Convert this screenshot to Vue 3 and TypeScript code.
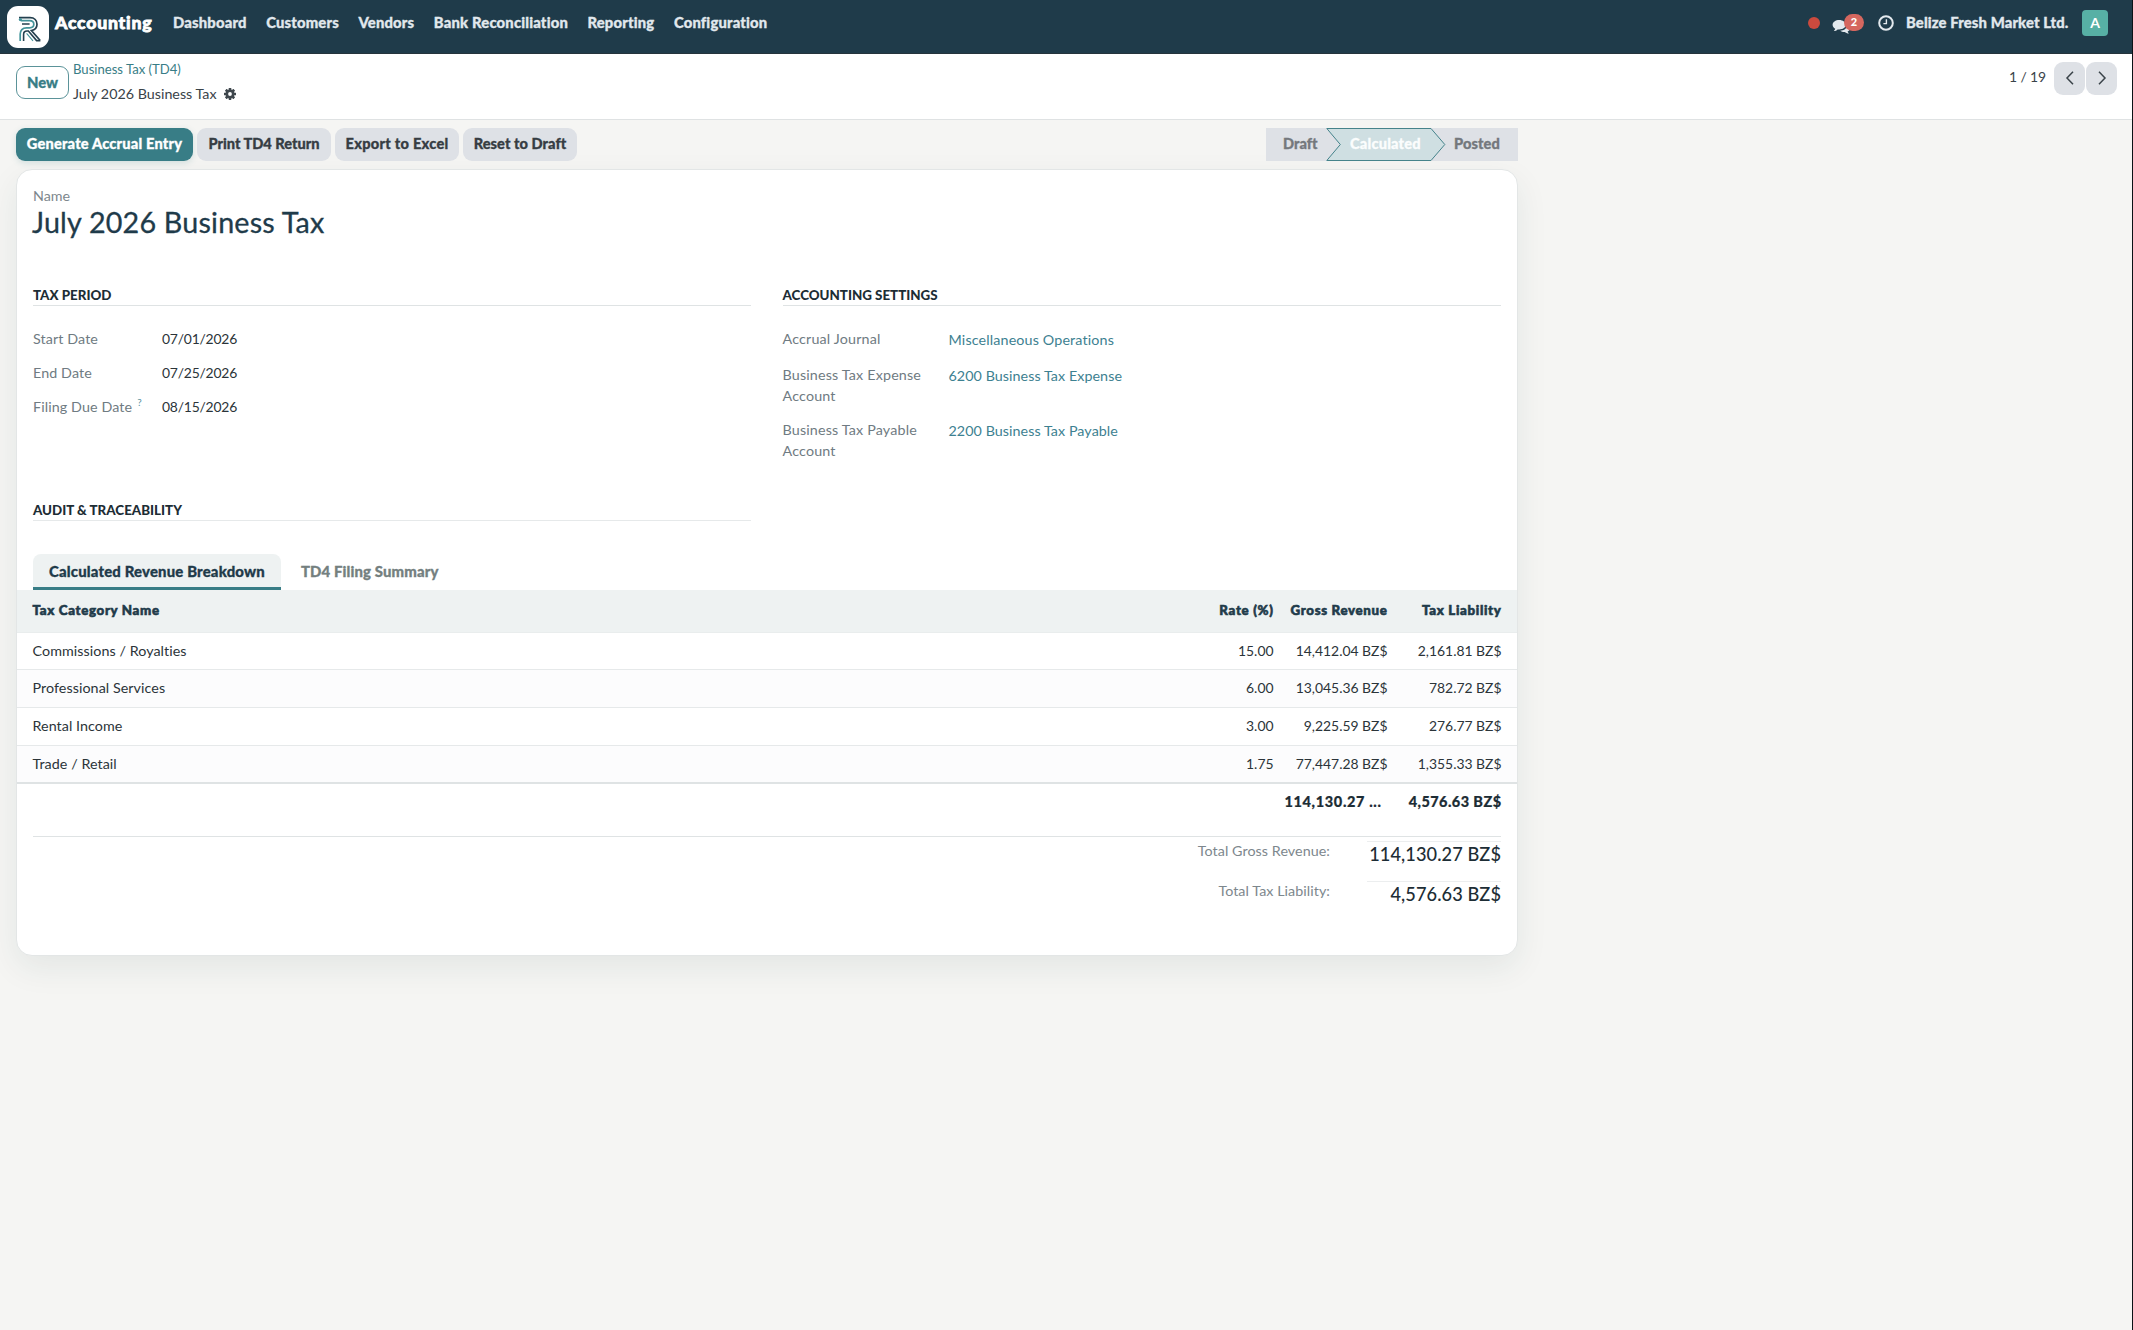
<script setup lang="ts">
interface Row {
  name: string
  rate: string
  gross: string
  tax: string
}

const menu: string[] = ['Dashboard', 'Customers', 'Vendors', 'Bank Reconciliation', 'Reporting', 'Configuration']

const rows: Row[] = [
  { name: 'Commissions / Royalties', rate: '15.00', gross: '14,412.04 BZ$', tax: '2,161.81 BZ$' },
  { name: 'Professional Services', rate: '6.00', gross: '13,045.36 BZ$', tax: '782.72 BZ$' },
  { name: 'Rental Income', rate: '3.00', gross: '9,225.59 BZ$', tax: '276.77 BZ$' },
  { name: 'Trade / Retail', rate: '1.75', gross: '77,447.28 BZ$', tax: '1,355.33 BZ$' },
]

const dates = [
  { label: 'Start Date', value: '07/01/2026', help: false },
  { label: 'End Date', value: '07/25/2026', help: false },
  { label: 'Filing Due Date', value: '08/15/2026', help: true },
]

const accounts = [
  { label: 'Accrual Journal', value: 'Miscellaneous Operations' },
  { label: 'Business Tax Expense Account', value: '6200 Business Tax Expense' },
  { label: 'Business Tax Payable Account', value: '2200 Business Tax Payable' },
]
</script>

<template>
  <div class="app">
    <header class="navbar">
      <div class="logo">
        <svg width="42" height="42" viewBox="0 0 42 42" fill="none">
          <path d="M12 11.7H23C27.5 11.7 30 14.6 30 18.2C30 21.6 27.6 24 24.4 24.6L33 34.3" stroke="#24404f" stroke-width="1.7" />
          <path d="M14 14.6H22.6C25.4 14.6 26.8 16.3 26.8 18.3C26.8 20.6 25 21.8 22.6 21.8H19.5C15.4 21.8 13.2 24.4 13.2 28V35" stroke="#43949b" stroke-width="1.7" />
          <path d="M15 18H22.6M16.6 35V28.4C16.6 26.2 17.8 25 20 25H21.4L29.6 34.6H33.4" stroke="#24404f" stroke-width="1.6" />
          <path d="M19.6 27.4L26 34.8" stroke="#43949b" stroke-width="1.1" />
          <circle cx="13.4" cy="13.6" r="1.6" fill="#43949b" />
        </svg>
      </div>
      <div class="nav-line">
        <span class="brand">Accounting</span>
        <nav class="menu">
          <a v-for="item in menu" :key="item">{{ item }}</a>
        </nav>
      </div>
      <div class="systray">
        <span class="dot"></span>
        <span class="chat">
          <svg width="20" height="16" viewBox="0 0 20 16" fill="#e3e9ee">
            <path d="M7.2 1C3.5 1 .6 3.1.6 5.8c0 1.6 1 3 2.6 3.9-.2.8-.7 1.5-1.4 2.2 1.5 0 2.8-.5 3.8-1.5.5.1 1 .1 1.6.1 3.7 0 6.600-2.100 6.600-4.700S10.900 1 7.200 1z" />
            <path d="M15.200 6c0 3-3 5.600-7 5.800 1.200.9 2.800 1.400 4.500 1.300 1.100.9 2.400 1.500 4.300 1.500-.8-.7-1.200-1.400-1.400-2.100 1.400-.7 2.300-1.800 2.300-3.100 0-1.400-1-2.600-2.700-3.400z" />
          </svg>
          <b class="badge">2</b>
        </span>
        <svg class="clock" width="16" height="16" viewBox="0 0 16 16" fill="none" stroke="#e3e9ee">
          <circle cx="8" cy="8" r="6.8" stroke-width="2" />
          <path d="M8.400 4.300V8.600H5.400" stroke-width="1.400" />
        </svg>
        <span class="company">Belize Fresh Market Ltd.</span>
        <span class="avatar">A</span>
      </div>
    </header>

    <section class="control">
      <button class="new">New</button>
      <div class="crumbs">
        <a>Business Tax (TD4)</a>
        <div class="current">
          <span>July 2026 Business Tax</span>
          <svg width="12" height="12" viewBox="-6 -6 12 12">
            <g fill="#3f474d">
              <rect v-for="n in 4" :key="n" x="-1.3" y="-6" width="2.6" height="12" rx=".4" :transform="`rotate(${n * 45})`" />
              <circle r="4.5" />
            </g>
            <circle r="1.9" fill="#fff" />
          </svg>
        </div>
      </div>
      <div class="pager">
        <span>1 / 19</span>
        <button><svg width="10" height="14" viewBox="0 0 10 14"><path d="M8 .8L2 7l6 6.200" /></svg></button>
        <button><svg width="10" height="14" viewBox="0 0 10 14"><path d="M2 .8L8 7l-6 6.200" /></svg></button>
      </div>
    </section>

    <main class="form">
      <div class="actions">
        <button class="btn primary">Generate Accrual Entry</button>
        <button class="btn print">Print TD4 Return</button>
        <button class="btn export">Export to Excel</button>
        <button class="btn reset">Reset to Draft</button>
        <div class="status">
          <span class="draft">Draft</span>
          <span class="step">
            <svg width="120" height="33" viewBox="0 0 120 33">
              <path d="M.8 .5H105L118.800 16.500L105 32.500H.8L14.300 16.500Z" fill="#cfdfe2" stroke="#45838b" />
            </svg>
            <b>Calculated</b>
          </span>
          <span class="posted">Posted</span>
        </div>
      </div>

      <article class="sheet">
        <div class="name-label">Name</div>
        <h1>July 2026 Business Tax</h1>

        <div class="groups">
          <section class="group">
            <h2>TAX PERIOD</h2>
            <div v-for="d in dates" :key="d.label" class="field">
              <label>{{ d.label }}<sup v-if="d.help">?</sup></label>
              <span class="date">{{ d.value }}</span>
            </div>
          </section>
          <section class="group accounts">
            <h2>ACCOUNTING SETTINGS</h2>
            <div v-for="a in accounts" :key="a.label" class="field">
              <label>{{ a.label }}</label>
              <a>{{ a.value }}</a>
            </div>
          </section>
        </div>

        <section class="group audit">
          <h2>AUDIT &amp; TRACEABILITY</h2>
        </section>

        <div class="tabs">
          <span class="tab active">Calculated Revenue Breakdown</span>
          <span class="tab">TD4 Filing Summary</span>
        </div>

        <div class="table">
          <div class="tr head">
            <span>Tax Category Name</span><span>Rate (%)</span><span>Gross Revenue</span><span>Tax Liability</span>
          </div>
          <div v-for="r in rows" :key="r.name" class="tr">
            <span>{{ r.name }}</span><span>{{ r.rate }}</span><span>{{ r.gross }}</span><span>{{ r.tax }}</span>
          </div>
          <div class="tr sum">
            <span></span><span></span><span class="cut">114,130.27 ...</span><span>4,576.63 BZ$</span>
          </div>
        </div>

        <div class="totals">
          <div class="total"><label>Total Gross Revenue:</label><strong>114,130.27 BZ$</strong></div>
          <div class="total"><label>Total Tax Liability:</label><strong>4,576.63 BZ$</strong></div>
        </div>
      </article>
    </main>
  </div>
</template>

<style>
body {
  margin: 0;
  background: #f5f5f3;
}
</style>

<style scoped>
.app {
  box-sizing: border-box;
  height: 1330px;
  border-right: 1px solid #0b1216;
  overflow: hidden;
  background: #f5f5f3;
  color: #2b3439;
  font: 400 14.3px/21.2px Lato, sans-serif;
  font-variant-ligatures: none;
}
button {
  margin: 0;
  padding: 0;
  border: 0;
  font: inherit;
  letter-spacing: inherit;
}
span, a, label, h1, h2, strong {
  white-space: nowrap;
}
.menu, .company, .new, .btn, .status, .tab {
  -webkit-text-stroke: 0.3px currentColor;
}
.navbar {
  display: flex;
  box-sizing: border-box;
  height: 54px;
  padding: 0 24px 0 7px;
  border-bottom: 1px solid #25343c;
  background: #1f3b4a;
  color: #e1e8ed;
  font-weight: 900;
}
.logo {
  width: 42px;
  height: 42px;
  margin: 6px 6px 0 0;
  border-radius: 11px;
  background: #fff;
}
.nav-line {
  display: flex;
  align-items: center;
  height: 45px;
}
.brand {
  width: 118px;
  color: #fff;
  font-size: 17.7px;
  letter-spacing: 0.75px;
  -webkit-text-stroke: 0.8px #fff;
}
.menu {
  display: flex;
  gap: 19.5px;
  font-size: 14.8px;
  letter-spacing: 0.18px;
}
.systray {
  display: flex;
  align-items: center;
  height: 46px;
  margin-left: auto;
}
.dot {
  width: 12px;
  height: 12px;
  margin-right: 12px;
  border-radius: 50%;
  background: #cb4a3e;
}
.chat {
  position: relative;
  width: 46px;
  height: 46px;
}
.chat svg {
  display: block;
  margin-top: 19px;
}
.badge {
  position: absolute;
  left: 12px;
  top: 14px;
  width: 20px;
  height: 17px;
  border-radius: 9px;
  background: #d5675f;
  color: #fff;
  font-size: 11px;
  line-height: 16px;
  text-align: center;
}
.clock {
  margin-right: 12px;
}
.company {
  width: 176px;
  margin-top: -1px;
  font-size: 14.8px;
  letter-spacing: 0.13px;
}
.avatar {
  width: 26px;
  height: 26px;
  border-radius: 4px;
  background: #57b0a5;
  color: #fff;
  font-size: 14px;
  font-weight: 700;
  line-height: 26px;
  text-align: center;
}
.control {
  display: flex;
  box-sizing: border-box;
  height: 66px;
  padding: 0 15px 0 16px;
  border-bottom: 1px solid #dfe2e3;
  background: #fff;
}
.new {
  box-sizing: border-box;
  width: 53px;
  height: 33px;
  margin: 12px 4px 0 0;
  border: 1px solid #5b9399;
  border-radius: 9px;
  background: #fff;
  color: #387d86;
  font-weight: 900;
  font-size: 14.8px;
  line-height: 27px;
}
.crumbs {
  padding-top: 5px;
  color: #3a4349;
}
.crumbs a {
  display: block;
  height: 25px;
  color: #387d86;
  font-size: 13.1px;
  line-height: 21px;
}
.current {
  display: flex;
  align-items: center;
  gap: 7px;
  height: 19px;
}
.pager {
  display: flex;
  gap: 1px;
  height: 33px;
  margin: 8px 0 0 auto;
  color: #3a4349;
}
.pager span {
  width: 44px;
  font-size: 13.9px;
  letter-spacing: -0.1px;
  line-height: 30px;
}
.pager button {
  width: 31px;
  height: 33px;
  border-radius: 9px;
  background: #dee1e6;
}
.pager path {
  fill: none;
  stroke: #3a4349;
  stroke-width: 1.5;
}
.pager svg {
  display: block;
  margin: -2px auto 0;
}
.form {
  width: 1502px;
  padding: 8px 0 0 16px;
}
.actions {
  display: flex;
  gap: 4px;
  height: 33px;
}
.btn {
  height: 33px;
  border-radius: 9px;
  background: #dee1e6;
  color: #363d43;
  font-weight: 900;
  font-size: 14.6px;
  line-height: 28px;
  padding-bottom: 2px;
}
.btn.primary {
  width: 177px;
  background: #387d86;
  color: #fff;
  letter-spacing: 0.2px;
  box-shadow: 0 2px 6px rgba(56, 125, 134, 0.18);
}
.print {
  width: 134px;
}
.export {
  width: 124px;
  letter-spacing: 0.27px;
}
.reset {
  width: 114px;
  letter-spacing: 0.06px;
}
.status {
  display: flex;
  width: 252px;
  height: 33px;
  margin-left: auto;
  background: #dee1e6;
  color: #74787d;
  font-weight: 900;
  font-size: 14.6px;
  line-height: 32px;
}
.draft {
  width: 43px;
  padding-left: 17px;
}
.step {
  position: relative;
  width: 120px;
}
.step svg {
  display: block;
}
.step b {
  position: absolute;
  left: 24px;
  top: 0;
  color: #fbfdfd;
  font-weight: 900;
  letter-spacing: 0.2px;
}
.posted {
  padding-left: 8px;
  letter-spacing: 0.1px;
}
.sheet {
  box-sizing: border-box;
  height: 787px;
  margin: 8px 0 0;
  border: 1px solid #e3e6e6;
  border-radius: 16px;
  background: #fff;
  box-shadow: 0 12px 32px rgba(31, 59, 64, 0.08);
}
.name-label {
  height: 21px;
  margin: 15px 0 0 16px;
  color: #7d878d;
}
h1 {
  height: 36px;
  margin: -2px 0 0 15px;
  color: #1f3b4a;
  font-weight: 400;
  font-size: 28.7px;
  letter-spacing: 0.2px;
  line-height: 36px;
  -webkit-text-stroke: 0.3px #1f3b4a;
}
.groups {
  display: flex;
  gap: 32px;
  height: 215px;
  padding: 0 16px;
  margin-top: 43px;
}
.group {
  width: 718px;
}
h2 {
  height: 22px;
  margin: 0 0 22px;
  border-bottom: 1px solid #dfe3e4;
  color: #1d2d35;
  font-weight: 900;
  font-size: 13.35px;
  line-height: 25px;
}
.field {
  display: flex;
  min-height: 21px;
  margin-bottom: 12.9px;
  color: #2b3439;
}
.field label {
  width: 129px;
  color: #6f7b82;
  letter-spacing: 0.1px;
}
.field sup {
  position: relative;
  top: -6px;
  margin-left: 5px;
  color: #5b939f;
  font-size: 10px;
  line-height: 0;
  vertical-align: baseline;
}
.date {
  font-size: 13.9px;
  letter-spacing: -0.2px;
}
.accounts {
  width: 719px;
}
.accounts .field {
  margin-bottom: 12.6px;
}
.accounts .field:nth-of-type(1) {
  margin-bottom: 14px;
}
.accounts label {
  width: 140px;
  margin-right: 26px;
  letter-spacing: 0.17px;
  white-space: normal;
}
.accounts a {
  padding-top: 1px;
  color: #3d8191;
  letter-spacing: 0.06px;
}
.accounts .field:nth-of-type(1) a {
  letter-spacing: 0.14px;
}
.audit {
  margin: 0 16px;
}
.audit h2 {
  margin-bottom: 33px;
  border-color: #e6e9ea;
}
.tabs {
  display: flex;
  gap: 4px;
  height: 36px;
  padding: 0 16px;
}
.tab {
  box-sizing: border-box;
  height: 36px;
  padding: 0 16px;
  color: #74807f;
  font-weight: 900;
  font-size: 14.9px;
  letter-spacing: 0.13px;
  line-height: 34px;
}
.tab.active {
  width: 248px;
  border-bottom: 3px solid #387d86;
  border-radius: 8px 8px 0 0;
  background: #eef2f2;
  color: #1f3b4a;
  letter-spacing: 0.18px;
}
.tr {
  display: grid;
  box-sizing: border-box;
  grid-template-columns: 1fr 110px 114px 114px;
  height: 37.75px;
  padding: 0 15.5px;
  border-bottom: 1px solid #e6e9ea;
  line-height: 35px;
}
.tr > span:first-child {
  letter-spacing: 0.06px;
}
.tr:nth-child(odd) {
  background: #fcfcfd;
}
.tr span + span {
  font-size: 13.9px;
  text-align: right;
}
.tr.head {
  height: 42.6px;
  border-bottom-color: #e9eded;
  background: #eef2f2;
  color: #1f3b4a;
  font-weight: 900;
  line-height: 40px;
}
.tr.head > span {
  font-size: 13.3px;
  letter-spacing: 0.66px;
  -webkit-text-stroke: 0.6px #1f3b4a;
}
.tr:nth-child(5) {
  border-bottom: 2px solid #dfe3e4;
}
.tr.sum {
  height: 52px;
  border-bottom: 0;
  background: none;
  color: #1d2d35;
  font-weight: 900;
  line-height: 36px;
}
.tr.sum span + span {
  font-size: 14.5px;
  letter-spacing: 0.43px;
  -webkit-text-stroke: 0.2px currentColor;
}
.tr.sum .cut {
  padding-right: 6px;
  letter-spacing: 0.65px;
}
.totals {
  margin: 0 16px;
  border-top: 1px solid #dfe3e4;
  padding-top: 4px;
}
.total {
  display: flex;
  justify-content: flex-end;
  gap: 37px;
  height: 40.3px;
}
.total label {
  color: #7d878d;
  line-height: 20px;
  letter-spacing: 0.06px;
}
.total strong {
  box-sizing: border-box;
  width: 134px;
  border-top: 1px solid #eceeef;
  color: #1d2d35;
  font-weight: 500;
  font-size: 18.2px;
  letter-spacing: 0.07px;
  line-height: 24px;
  text-align: right;
}
</style>
